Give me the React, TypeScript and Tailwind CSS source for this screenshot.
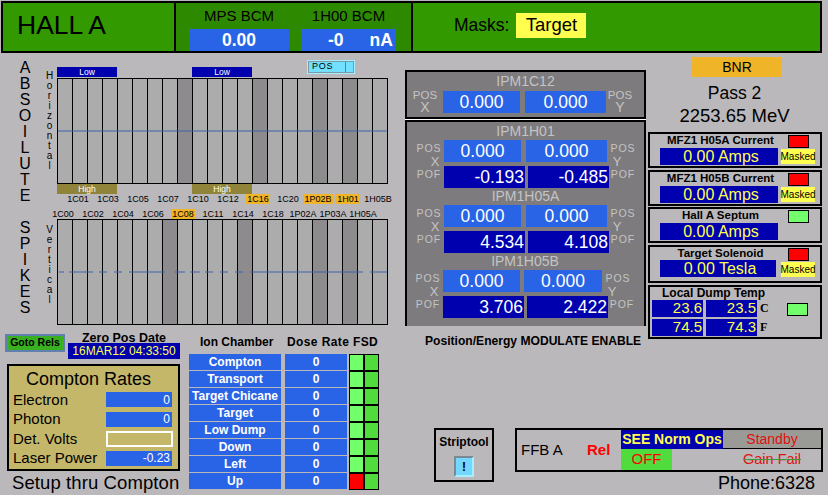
const absLabels = [
  { name: "1C01" }, { name: "1C03" }, { name: "1C05" }, { name: "1C07" }, { name: "1C10" }, { name: "1C12" },
  { name: "1C16", hot: true }, { name: "1C20" }, { name: "1P02B", hot: true }, { name: "1H01", hot: true }, { name: "1H05B" },
];
const spikeLabels = [
  { name: "1C00" }, { name: "1C02" }, { name: "1C04" }, { name: "1C06" }, { name: "1C08", hot: true }, { name: "1C11" },
  { name: "1C14" }, { name: "1C18" }, { name: "1P02A" }, { name: "1P03A" }, { name: "1H05A" },
];
const ionRows = ["Compton", "Transport", "Target Chicane", "Target", "Low Dump", "Down", "Left", "Up"];

function LetterColumn({ text, className }: { text: string; className: string }) {
  return (
    <div className={`flex w-[41px] shrink-0 flex-col items-center pl-[9px] text-[16px] leading-[16px] text-black ${className}`}>
      {text.split("").map((ch, i) => (
        <span key={i} className="h-[16px]">{ch}</span>
      ))}
    </div>
  );
}

function SmallColumn({ text, className }: { text: string; className: string }) {
  return (
    <div className={`flex w-[16px] shrink-0 flex-col items-center pl-px text-[10px] leading-[10px] text-black ${className}`}>
      {text.split("").map((ch, i) => (
        <span key={i} className="h-[10px]">{ch}</span>
      ))}
    </div>
  );
}

function Chart({ dark, dashed }: { dark: number[]; dashed?: boolean }) {
  return (
    <div className="relative flex h-[106px] w-[331px] border border-black bg-[#acacac]">
      {Array.from({ length: 22 }).map((_, i) => (
        <div
          key={i}
          className={`h-full ${i === 21 ? "w-[14px]" : "w-[15px] border-r border-black"} ${dark.includes(i) ? "bg-[#8d8b8d]" : "bg-[#acacac]"}`}
        />
      ))}
      <svg className="absolute left-0 top-[51px]" width="329" height="2" fill="none">
        <path
          d={
            dashed
              ? "M1 1h5M11 1h24M41 1h8M56 1h8M71 1h36M117 1h10M132 1h10M147 1h8M162 1h8M177 1h8M192 1h113M312 1h18"
              : "M0 1h329"
          }
          stroke="#3f62a8"
        />
      </svg>
    </div>
  );
}

function LabelRow({ labels, className }: { labels: { name: string; hot?: boolean }[]; className: string }) {
  return (
    <div className={`flex h-[10px] items-center text-[9px] leading-[10px] text-black ${className}`}>
      {labels.map((l) => (
        <div key={l.name} className="flex w-[30px] shrink-0 justify-center">
          <span className={`whitespace-nowrap px-px ${l.hot ? "bg-[#f0b428]" : ""}`}>{l.name}</span>
        </div>
      ))}
    </div>
  );
}

function Field({ value, w, dark }: { value: string; w: string; dark?: boolean }) {
  return (
    <div
      className={`flex h-[22px] shrink-0 items-center text-[17.5px] text-white ${w} ${
        dark ? "justify-end bg-[#0000ae] pr-px" : "justify-center bg-[#2a64e6]"
      }`}
    >
      {value}
    </div>
  );
}

function AxisLabel({ axis, className, axisClass }: { axis: string; className: string; axisClass: string }) {
  return (
    <div className={`flex shrink-0 flex-col items-center pt-[2px] text-[#c4c4c4] ${className}`}>
      <span className="text-[10.5px] leading-[13px] tracking-[1px]">POS</span>
      <span className={`text-[13px] leading-[13px] ${axisClass}`}>{axis}</span>
    </div>
  );
}

function Ipm({ title, x, y, ox, oy, shift, titleClass }: {
  title: string; x: string; y: string; ox: string; oy: string; shift?: boolean; titleClass: string;
}) {
  return (
    <div className={shift ? "-ml-px" : ""}>
      <div className={`text-center text-[14px] text-[#c4c4c4] ${titleClass}`}>{title}</div>
      <div className="flex h-[26px]">
        <AxisLabel axis="X" className="w-[37px] pl-[7px]" axisClass="ml-[12px]" />
        <Field value={x} w="w-[77px]" />
        <div className={shift ? "w-[4px]" : "w-[5px]"} />
        <Field value={y} w={shift ? "w-[78px]" : "w-[81px]"} />
        <AxisLabel axis="Y" className="ml-[2px] w-[28px]" axisClass="-ml-[12px]" />
      </div>
      <div className="flex h-[22px]">
        <div className="flex w-[37px] shrink-0 items-center justify-center pb-[4px] pl-[7px] text-[10.5px] tracking-[1px] text-[#c4c4c4]">POF</div>
        <Field value={ox} w="w-[81px]" dark />
        <div className="w-[3px]" />
        <Field value={oy} w="w-[81px]" dark />
        <div className="flex w-[28px] shrink-0 items-center justify-center pb-[4px] text-[10.5px] tracking-[1px] text-[#c4c4c4]">POF</div>
      </div>
    </div>
  );
}

function Light({ on, className }: { on?: boolean; className?: string }) {
  return <div className={`h-[13px] w-[21px] border border-black ${on ? "bg-[#73ff6b]" : "bg-[#ff0000]"} ${className ?? ""}`} />;
}

function Masked() {
  return <div className="mt-px flex h-[15px] w-[34px] items-center justify-center bg-[#ffff50] text-[10px] text-black">Masked</div>;
}

function MagnetBox({ title, value, w, h, on, masked, mt, tight }: {
  title: string; value: string; w: string; h: string; on?: boolean; masked?: boolean; mt: string; tight?: boolean;
}) {
  return (
    <div className={`flex border-2 border-black ${h} ${mt}`}>
      <div className="ml-[10px] flex w-[121px] flex-col">
        <div className={`whitespace-nowrap text-center text-[11.5px] font-bold leading-[13px] text-black ${tight ? "h-[13px]" : "h-[14px]"}`}>{title}</div>
        <div className={`flex h-[17px] items-center justify-center bg-[#0000ae] pl-[4px] text-[16px] text-[#ffff50] ${w}`}>{value}</div>
      </div>
      <div className="flex w-[34px] flex-col items-center pt-px">
        <Light on={on} />
        {masked && <Masked />}
      </div>
    </div>
  );
}

function TempCell({ value }: { value: string }) {
  return (
    <div className="flex h-[17px] w-[51px] items-center justify-end bg-[#0000ae] pr-px text-[15px] text-[#ffff50]">{value}</div>
  );
}

function ComptonRow({ label, value, empty }: { label: string; value?: string; empty?: boolean }) {
  return (
    <div className="flex h-[19.5px] items-center pl-[4px]">
      <span className="w-[93px] whitespace-nowrap text-[15px] text-black">{label}</span>
      {empty ? (
        <div className="h-[16px] w-[67px] border-2 border-white" />
      ) : (
        <div className="flex h-[15px] w-[66px] items-center justify-end bg-[#2a64e6] pr-[2px] text-[12px] text-white">{value}</div>
      )}
    </div>
  );
}

function TopPos({ axis }: { axis: string }) {
  return (
    <div className="-mt-px flex h-[23px] flex-col items-center text-[#c4c4c4]">
      <span className="text-[11.5px] leading-[11px]">POS</span>
      <span className="text-[14px] leading-[12px]">{axis}</span>
    </div>
  );
}

export default function App() {
  return (
    <div className="h-[495px] w-[828px] overflow-hidden bg-[#bbb8bb] pt-px font-['Liberation_Sans',sans-serif]">
      {/* header */}
      <div className="ml-px flex h-[52px] w-[821px] border-2 border-black">
        <div className="flex w-[171px] items-center bg-[#339900] pb-[2px] pl-[14px] text-[26.5px] text-black">HALL A</div>
        <div className="flex w-[239px] border-x-2 border-black bg-[#2d8a00] pl-[13px] pt-[3px]">
          <div className="flex w-[100px] flex-col items-center">
            <span className="text-[15px] leading-[20px] text-black">MPS BCM</span>
            <div className="mt-[3px] flex h-[22px] w-[100px] items-center justify-center bg-[#2a64e6] text-[17.5px] font-bold text-white">0.00</div>
          </div>
          <div className="ml-[12px] flex w-[95px] flex-col items-center">
            <span className="text-[15px] leading-[20px] text-black">1H00 BCM</span>
            <div className="mt-[3px] flex h-[22px] w-[95px] items-center bg-[#2a64e6] text-[17.5px] font-bold text-white">
              <span className="ml-[27px]">-0</span>
              <span className="ml-[26px]">nA</span>
            </div>
          </div>
        </div>
        <div className="flex flex-1 items-center bg-[#339900] pb-[4px] pl-[41px]">
          <span className="text-[17.5px] text-black">Masks:</span>
          <div className="ml-[7px] flex h-[25px] w-[70px] items-center justify-center bg-[#ffff50] text-[18.5px] text-black">Target</div>
        </div>
      </div>

      <div className="flex">
        {/* left column */}
        <div className="w-[405px] shrink-0">
          <div className="flex h-[151px]">
            <LetterColumn text="ABSOILUTE" className="pt-[7px]" />
            <SmallColumn text="Horizontal" className="pt-[18px]" />
            <div>
              <div className="flex h-[25px] items-end pb-px">
                <div className="flex h-[10px] w-[60px] items-center justify-center bg-[#0000ae] text-[8.5px] text-white">Low</div>
                <div className="ml-[75px] flex h-[10px] w-[60px] items-center justify-center bg-[#0000ae] text-[8.5px] text-white">Low</div>
                <div className="mb-[3px] ml-[55px] flex h-[14px] w-[48px] items-center border border-[#a5f0ff] bg-[#73e0ff] pl-[4px] outline outline-1 -outline-offset-2 outline-[#7a9aa8] text-[9px] tracking-[0.8px] text-black">
                  POS
                  <div className="ml-auto mr-[8px] h-full w-px bg-[#3f8fb0]" />
                </div>
              </div>
              <Chart dark={[8, 13, 17, 19]} />
              <div className="flex h-[10px]">
                <div className="flex h-full w-[60px] items-center justify-center bg-[#8f8439] text-[8.5px] text-white">High</div>
                <div className="ml-[75px] flex h-full w-[60px] items-center justify-center bg-[#8f8439] text-[8.5px] text-white">High</div>
              </div>
              <LabelRow labels={absLabels} className="ml-[6px]" />
            </div>
          </div>

          <div className="mt-[5px] flex h-[116px]">
            <LetterColumn text="SPIKES" className="pt-[11px]" />
            <SmallColumn text="Vertical" className="pt-[16px]" />
            <div>
              <LabelRow labels={spikeLabels} className="-ml-[9px]" />
              <Chart dark={[7, 12, 17, 19]} dashed />
            </div>
          </div>

          <div className="flex">
            <div className="w-[189px] shrink-0">
              <div className="ml-[5px] mt-[8px] flex">
                <div className="mt-px flex h-[18px] w-[60px] items-center justify-center border-2 border-[#5f80b0] bg-[#39b020] text-[10.5px] font-bold text-black">Goto Rels</div>
                <div className="ml-[3px] w-[112px]">
                  <div className="h-[9px] whitespace-nowrap text-center text-[12.5px] font-bold leading-[10px] text-black">Zero Pos Date</div>
                  <div className="mt-[1px] flex h-[16px] items-center justify-center whitespace-nowrap bg-[#0000ae] text-[12px] text-[#ffff50]">16MAR12 04:33:50</div>
                </div>
              </div>
              <div className="ml-[7px] mt-[5px] h-[107px] w-[173px] border-2 border-black bg-[#c4b76a]">
                <div className="h-[24px] pl-[17px] pt-px text-[18px] leading-[24px] text-black">Compton Rates</div>
                <ComptonRow label="Electron" value="0" />
                <ComptonRow label="Photon" value="0" />
                <ComptonRow label="Det. Volts" empty />
                <ComptonRow label="Laser Power" value="-0.23" />
              </div>
              <div className="ml-[12px] mt-[1px] whitespace-nowrap text-[18.5px] leading-[22px] tracking-[0.1px] text-black">Setup thru Compton</div>
            </div>

            <div className="w-[192px] pt-[10px]">
              <div className="flex h-[14px] whitespace-nowrap text-[12px] font-bold leading-[14px] text-black">
                <span className="ml-[11px] w-[87px]">Ion Chamber</span>
                <span className="w-[66px] tracking-[0.4px]">Dose Rate</span>
                <span className="tracking-[0.3px]">FSD</span>
              </div>
              <div className="mt-[5px] flex">
                <div className="flex flex-col gap-px">
                  {ionRows.map((row) => (
                    <div key={row} className="flex h-[16px]">
                      <div className="flex w-[92px] items-center justify-center whitespace-nowrap bg-[#2a64e6] text-[12px] font-bold text-white">{row}</div>
                      <div className="ml-[4px] flex w-[62px] items-center justify-center bg-[#2a64e6] text-[12px] font-bold text-white">0</div>
                    </div>
                  ))}
                </div>
                <div className="ml-[2px] grid h-[136px] w-[30px] grid-cols-2 gap-[2px] bg-black p-px">
                  {ionRows.map((row) => [
                    <div key={`${row}-a`} className={row === "Up" ? "bg-[#ff0000]" : "bg-[#73ff6b]"} />,
                    <div key={`${row}-b`} className="bg-[#50dc3c]" />,
                  ])}
                </div>
              </div>
            </div>
          </div>
        </div>

        {/* right part */}
        <div className="flex-1">
          <div className="flex h-[294px]">
            <div className="w-[241px] shrink-0 pt-[17px]">
              <div className="h-[49px] border-x-2 border-y-2 border-black bg-[#7d7b7d]">
                <div className="h-[19px] text-center text-[14px] leading-[19px] text-[#c4c4c4]">IPM1C12</div>
                <div className="flex">
                  <div className="w-[36px]"><TopPos axis="X" /></div>
                  <Field value="0.000" w="w-[77px]" />
                  <div className="w-[5px]" />
                  <Field value="0.000" w="w-[81px]" />
                  <div className="w-[28px]"><TopPos axis="Y" /></div>
                </div>
              </div>
              <div className="h-px bg-white" />
              <div className="h-[206px] border-x-2 border-t-2 border-black bg-[#7d7b7d]">
                <Ipm title="IPM1H01" x="0.000" y="0.000" ox="-0.193" oy="-0.485" titleClass="h-[18px] leading-[18px]" />
                <Ipm title="IPM1H05A" x="0.000" y="0.000" ox="4.534" oy="4.108" titleClass="h-[17px] leading-[17px]" />
                <Ipm title="IPM1H05B" x="0.000" y="0.000" ox="3.706" oy="2.422" shift titleClass="h-[17px] leading-[17px]" />
              </div>
              <div className="ml-[20px] mt-[6px] whitespace-nowrap text-[12.1px] font-bold text-black">Position/Energy MODULATE ENABLE</div>
            </div>

            <div className="ml-[2px] w-[174px] shrink-0">
              <div className="ml-[44px] mt-[4px] flex h-[20px] w-[90px] items-center justify-center bg-[#f0b428] text-[14px] text-black">BNR</div>
              <div className="mt-[5px] ml-[-1px] text-center text-[17.5px] leading-[22px] text-black">Pass 2</div>
              <div className="ml-[-1px] text-center text-[18.5px] leading-[24px] text-black">2253.65 MeV</div>
              <MagnetBox title="MFZ1 H05A Current" value="0.00 Amps" w="w-[118px]" h="h-[36px]" masked mt="mt-[4px]" />
              <MagnetBox title="MFZ1 H05B Current" value="0.00 Amps" w="w-[118px]" h="h-[36px]" masked mt="mt-[2px]" />
              <MagnetBox title="Hall A Septum" value="0.00 Amps" w="w-[118px]" h="h-[36px]" on mt="mt-px" />
              <MagnetBox title="Target Solenoid" value="0.00 Tesla" w="w-[116px]" h="h-[38px]" masked tight mt="mt-[2px]" />
              <div className="mt-[2px] h-[54px] border-2 border-black pl-[2px]">
                <div className="h-[13px] pl-[10px] text-[12px] font-bold leading-[13px] text-black">Local Dump Temp</div>
                <div className="flex">
                  <div className="grid grid-cols-[51px_51px_24px] gap-x-[3px] gap-y-[2px]">
                    <TempCell value="23.6" />
                    <TempCell value="23.5" />
                    <span className="font-['Liberation_Serif',serif] text-[12px] font-bold leading-[17px] text-black">C</span>
                    <TempCell value="74.5" />
                    <TempCell value="74.3" />
                    <span className="font-['Liberation_Serif',serif] text-[12px] font-bold leading-[17px] text-black">F</span>
                  </div>
                  <Light on className="ml-[3px] mt-[3px]" />
                </div>
              </div>
            </div>
          </div>

          <div className="ml-[29px] mt-[81px] flex items-start">
            <div className="flex h-[54px] w-[60px] flex-col items-center border-2 border-black pt-[5px]">
              <span className="text-[12px] font-bold leading-[14px] text-black">Striptool</span>
              <div className="mt-[7px] flex h-[21px] w-[20px] items-center justify-center border-2 border-b-[#a5f0ff] border-l-[#7a8a92] border-r-[#a5f0ff] border-t-[#7a8a92] bg-[#73d7ff] text-[12px] font-bold text-black">!</div>
            </div>
            <div className="ml-[21px]">
              <div className="flex h-[44px] w-[308px] border-2 border-black">
                <div className="flex w-[104px] items-center text-[15px] text-black">
                  <span className="ml-[4px] w-[66px]">FFB A</span>
                  <span className="font-bold text-[#ff0000]">Rel</span>
                </div>
                <div className="w-[102px]">
                  <div className="flex h-[19px] items-center justify-center whitespace-nowrap bg-[#0000ae] text-[14px] font-bold text-[#ffff50]">SEE Norm Ops</div>
                  <div className="flex h-[21px] w-[51px] items-center justify-center bg-[#50dc3c] text-[15px] text-[#ff0000]">OFF</div>
                </div>
                <div className="flex-1">
                  <div className="box-content flex h-[18px] items-center justify-center border-b border-black bg-[#9a9a96] text-[14px] text-[#e01010]">Standby</div>
                  <div className="flex h-[21px] items-center justify-center text-[14.5px] text-[#e01010] line-through decoration-[#3c9c3c]">Gain Fail</div>
                </div>
              </div>
              <div className="mr-[8px] text-right text-[18px] leading-[22px] text-black">Phone:6328</div>
            </div>
          </div>
        </div>
      </div>
    </div>
  );
}
